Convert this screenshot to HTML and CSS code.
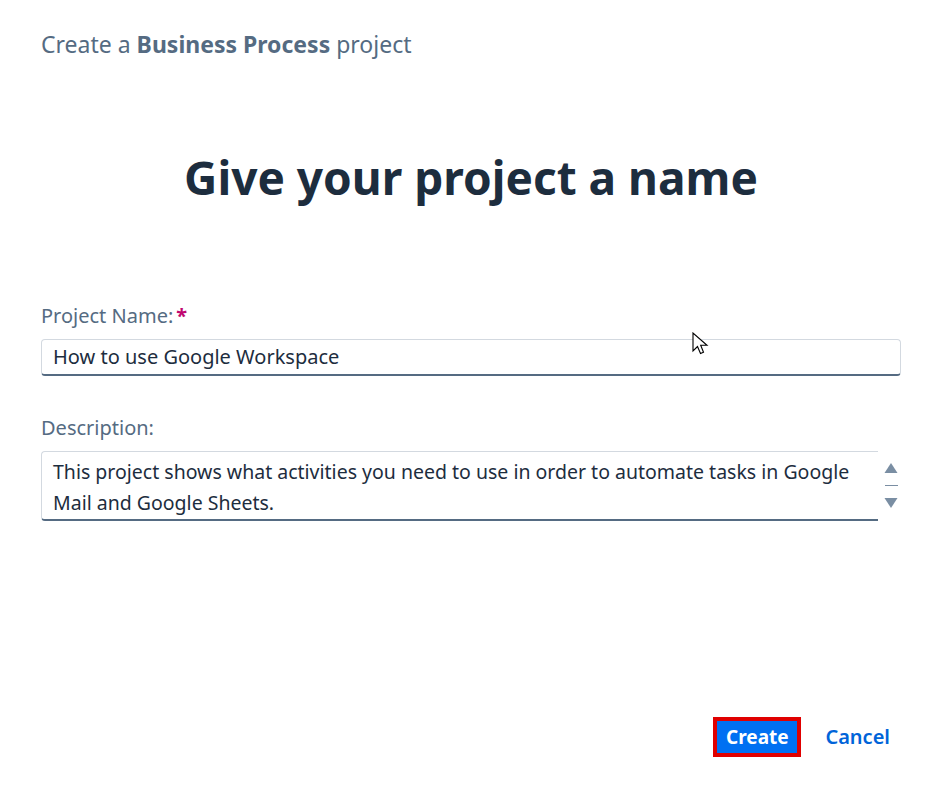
FILE: index.html
```html
<!DOCTYPE html>
<html lang="en">
<head>
<meta charset="utf-8">
<title>Create a Business Process project</title>
<link rel="stylesheet" href="styles.css">
</head>
<body>
<div class="page">
  <div class="subtitle">Create a <b>Business Process</b> project</div>
  <h1 class="heading">Give your project a name</h1>
  <div class="form">
    <div class="field">
      <label class="label">Project Name:<span class="req">*</span></label>
      <div class="input">How to use Google Workspace</div>
    </div>
    <div class="field field-desc">
      <label class="label">Description:</label>
      <div class="textarea-wrap">
        <div class="textarea">This project shows what activities you need to use in order to automate tasks in Google Mail and Google Sheets.</div>
        <div class="scroll">
          <svg width="14" height="12" viewBox="0 0 14 12"><path d="M7 1 L13.5 11 L0.5 11 Z" fill="#7a8ea3"/></svg>
          <span class="scroll-line"></span>
          <svg width="14" height="12" viewBox="0 0 14 12"><path d="M0.5 1 L13.5 1 L7 11 Z" fill="#7a8ea3"/></svg>
        </div>
      </div>
    </div>
  </div>
  <div class="actions">
    <button class="btn-create">Create</button>
    <button class="btn-cancel">Cancel</button>
  </div>
</div>
<svg class="cursor" width="20" height="26" viewBox="0 0 20 26"><path d="M1 1 L1 19 L5.5 14.5 L8.5 21.5 L11.5 20.2 L8.7 13.3 L15 13.3 Z" fill="#fff" stroke="#000" stroke-width="1.1" stroke-linejoin="miter"/></svg>
</body>
</html>
```
FILE: styles.css
```css
html, body {
  margin: 0;
  padding: 0;
  background: #ffffff;
}
body {
  font-family: "Noto Sans", "Open Sans", sans-serif;
  width: 946px;
  height: 792px;
  position: relative;
  overflow: hidden;
}
.page {
  padding: 29px 45px 0 41px;
  display: flex;
  flex-direction: column;
}
.subtitle {
  font-size: 23px;
  color: #556b82;
  line-height: 30px;
}
.subtitle b {
  font-weight: 700;
}
.heading {
  margin: 90px 0 0 0;
  text-align: center;
  font-size: 46px;
  font-weight: 700;
  color: #1d2d3e;
  line-height: 56px;
}
.form {
  margin-top: 98px;
  display: flex;
  flex-direction: column;
  gap: 39px;
}
.field {
  display: flex;
  flex-direction: column;
}
.label {
  font-size: 20px;
  color: #556b82;
  line-height: 26px;
  margin-bottom: 10px;
}
.req {
  color: #c0076f;
  font-weight: 700;
  margin-left: 3px;
}
.input {
  height: 37px;
  box-sizing: border-box;
  border: 1px solid #d3d9e0;
  border-bottom: 2px solid #556b82;
  border-radius: 4px;
  padding: 0 11px;
  font-size: 20px;
  line-height: 33px;
  color: #1d2d3e;
}
.textarea-wrap {
  display: flex;
  align-items: flex-start;
}
.textarea {
  flex: 0 0 837px;
  height: 70px;
  box-sizing: border-box;
  border: 1px solid #d3d9e0;
  border-right: none;
  border-bottom: 2px solid #556b82;
  border-radius: 4px 0 0 4px;
  padding: 4px 0 0 11px;
  font-size: 19.5px;
  line-height: 31px;
  color: #1d2d3e;
}
.scroll {
  margin-left: 6px;
  padding-top: 11px;
  display: flex;
  flex-direction: column;
  align-items: center;
  width: 14px;
}
.scroll-line {
  display: block;
  width: 13px;
  height: 1px;
  background: #7a8ea3;
  margin: 11px 0 11px 0;
}
.actions {
  margin-top: 196px;
  display: flex;
  justify-content: flex-end;
  align-items: center;
  gap: 24px;
  padding-right: 11px;
}
.btn-create {
  font-family: inherit;
  background: #0070f2;
  color: #ffffff;
  font-size: 19px;
  font-weight: 700;
  border: 4px solid #e00000;
  box-shadow: none;
  height: 40px;
  width: 88px;
  padding: 0;
  line-height: 30px;
  cursor: pointer;
}
.btn-cancel {
  font-family: inherit;
  background: transparent;
  border: none;
  color: #0064d9;
  font-size: 20px;
  font-weight: 600;
  padding: 0;
  line-height: 30px;
}
.cursor {
  position: absolute;
  left: 692px;
  top: 332px;
}
```
